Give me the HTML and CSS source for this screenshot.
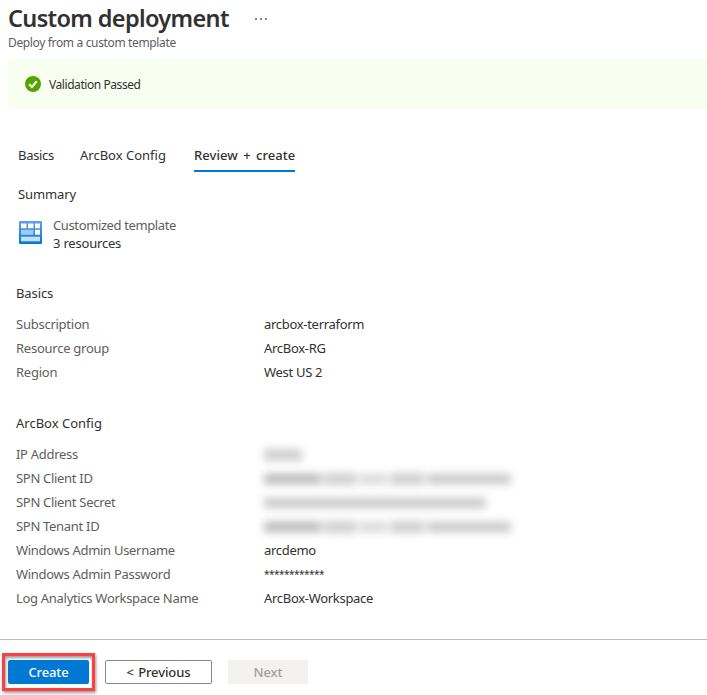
FILE: index.html
```html
<!DOCTYPE html>
<html lang="en">
<head>
<meta charset="utf-8">
<title>Custom deployment</title>
<link rel="stylesheet" href="styles.css">
</head>
<body>
<header class="page-header">
  <div class="title-row">
    <h1 class="title">Custom deployment</h1>
    <svg class="more" width="12" height="2" viewBox="0 0 12 2"><path d="M0 0h2v2H0zM5 0h2v2H5zM10 0h2v2h-2z" fill="#8a8886"/></svg>
  </div>
  <p class="subtitle">Deploy from a custom template</p>
</header>
<div class="banner">
  <svg width="16" height="16" viewBox="0 0 16 16"><circle cx="8" cy="8" r="8" fill="#57a300"/><path d="M4.200 8.200 6.900 10.900 11.800 5.300" fill="none" stroke="#fff" stroke-width="2.100"/></svg>
  <span class="banner-text">Validation Passed</span>
</div>
<nav class="tabs">
  <span class="tab tab-basics">Basics</span>
  <span class="tab tab-config">ArcBox Config</span>
  <span class="tab tab-active">Review + create</span>
</nav>
<h2 class="summary-title">Summary</h2>
<div class="template">
  <svg width="23" height="23" viewBox="0 0 23 23">
    <defs><linearGradient id="tile" x1="0" y1="0" x2="0" y2="1"><stop offset="0" stop-color="#5ea0ef"/><stop offset="1" stop-color="#0078d4"/></linearGradient></defs>
    <rect width="23" height="23" rx="1" fill="url(#tile)"/>
    <path d="M2 2.500h5.500v4.700H2zM9 2.500h5.500v4.700H9zM16 2.500h5v4.700h-5zM16 8.800h5v5h-5z" fill="#fff"/>
    <path d="M2 8.800h12.500v5H2z" fill="#9ccbf8"/>
    <path d="M2 15.700h19v4.600H2z" fill="#c3e1fb"/>
  </svg>
  <div class="template-text">
    <div class="muted">Customized template</div>
    <div class="count">3 resources</div>
  </div>
</div>
<section class="group basics">
  <h2 class="group-title">Basics</h2>
  <dl class="fields">
    <dt>Subscription</dt><dd>arcbox-terraform</dd>
    <dt>Resource group</dt><dd>ArcBox-RG</dd>
    <dt>Region</dt><dd>West US 2</dd>
  </dl>
</section>
<section class="group config">
  <h2 class="group-title">ArcBox Config</h2>
  <dl class="fields">
    <dt>IP Address</dt><dd class="redacted"><i class="bar w38 tall"></i></dd>
    <dt>SPN Client ID</dt><dd class="redacted"><i class="bar w57 dark"></i><i class="bar w31 tall"></i><i class="bar w26 faint"></i><i class="bar w34 tall"></i><i class="bar w82"></i></dd>
    <dt>SPN Client Secret</dt><dd class="redacted"><i class="bar w222"></i></dd>
    <dt>SPN Tenant ID</dt><dd class="redacted"><i class="bar w57 dark"></i><i class="bar w31 tall"></i><i class="bar w26 faint"></i><i class="bar w34 tall"></i><i class="bar w82"></i></dd>
    <dt>Windows Admin Username</dt><dd>arcdemo</dd>
    <dt>Windows Admin Password</dt><dd class="stars">************</dd>
    <dt>Log Analytics Workspace Name</dt><dd>ArcBox-Workspace</dd>
  </dl>
</section>
<footer class="actions">
  <div class="highlight"><button class="btn primary">Create</button></div>
  <button class="btn secondary">&lt; Previous</button>
  <button class="btn disabled">Next</button>
</footer>
</body>
</html>
```
FILE: styles.css
```css
* { box-sizing: border-box; }
body {
  margin: 0;
  width: 707px;
  height: 695px;
  overflow: hidden;
  background: #fff;
  color: #323130;
  font: 13px/24px "Noto Sans", "Open Sans", sans-serif;
  display: flex;
  flex-direction: column;
}
h1, h2, p, dl, dd { margin: 0; }
h2 { font-size: 13px; font-weight: 400; line-height: 24px; letter-spacing: -0.1px; }
.page-header { height: 59px; padding: 3px 0 0 8px; }
.title-row { display: flex; align-items: center; height: 32px; }
.title { width: 247px; font-size: 23.5px; line-height: 30px; padding-bottom: 2px; font-weight: 600; letter-spacing: -0.65px; white-space: nowrap; }
.subtitle { font-size: 12px; line-height: 16px; color: #605e5c; letter-spacing: -0.35px; }
.banner { display: flex; align-items: center; gap: 8px; height: 50px; margin-left: 8px; padding-left: 17px; background: #f8fff0; border-radius: 2px 0 0 2px; }
.banner-text { padding-top: 2px; font-size: 12px; line-height: 16px; letter-spacing: -0.43px; }
.tabs { display: flex; margin: 34px 0 0 18px; height: 29px; }
.tab { white-space: nowrap; }
.tab-basics { width: 62px; letter-spacing: -0.3px; }
.tab-config { width: 114px; }
.tab-active { width: 101px; font-weight: 500; letter-spacing: 0.05px; word-spacing: 2px; border-bottom: 2px solid #0078d4; }
.summary-title { margin: 10px 0 0 18px; }
.template { display: flex; gap: 11px; margin: 10px 0 0 19px; height: 37px; }
.template svg { margin-top: 5px; }
.template-text { line-height: 18px; letter-spacing: -0.38px; }
.count { letter-spacing: -0.2px; }
.muted, dt { color: #605e5c; }
.group { margin-left: 16px; }
.basics { margin-top: 28px; }
.basics dt { letter-spacing: -0.25px; }
.config { margin-top: 27px; }
.config .group-title { letter-spacing: 0; }
.fields { display: grid; grid-template-columns: 248px 1fr; grid-auto-rows: 24px; margin-top: 7px; letter-spacing: -0.3px; }
.stars { font-size: 10px; line-height: 25px; letter-spacing: -0.51px; }
.redacted { display: flex; align-items: center; gap: 3px; padding-top: 1px; filter: blur(4px); }
.bar { height: 10px; background: #c8c8c8; }
.tall { height: 12px; background: #cfcfcf; }
.dark { background: #b8b8b8; }
.faint { background: #d8d8d8; }
.w26 { width: 28px; }
.w31 { width: 32px; }
.w34 { width: 34px; }
.w38 { width: 38px; }
.w57 { width: 57px; }
.w82 { width: 84px; }
.w222 { width: 222px; }
.actions { display: flex; align-items: flex-start; margin-top: 29px; padding: 13px 0 0 2px; border-top: 1px solid #bdbdbd; }
.highlight { width: 93px; height: 38px; border: 3px solid #fb4143; padding: 4px 3px; box-shadow: 1px 2px 3px #0006, inset 1px 2px 3px #0006; }
.btn { display: block; height: 24px; padding: 0; border: 0; border-radius: 2px; font: 500 13px/24px "Noto Sans", "Open Sans", sans-serif; letter-spacing: -0.1px; }
.primary { width: 81px; background: #0078d4; color: #fff; }
.secondary { width: 107px; margin: 7px 16px 0 10px; border: 1px solid #8a8886; background: #fff; color: #323130; line-height: 22px; word-spacing: 1px; }
.disabled { width: 80px; margin-top: 7px; background: #f3f2f1; color: #a19f9d; }
```
